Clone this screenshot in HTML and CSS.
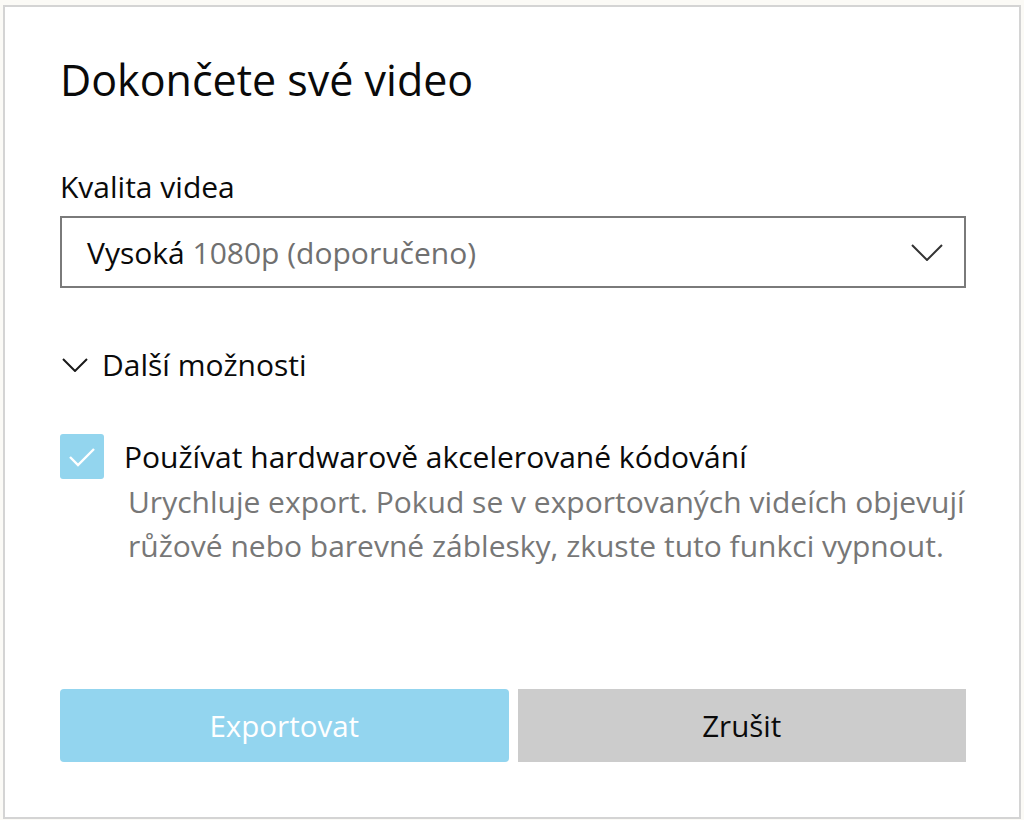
FILE: index.html
```html
<!DOCTYPE html>
<html lang="cs">
<head>
<meta charset="utf-8">
<title>Dokončete své video</title>
<link rel="stylesheet" href="styles.css">
</head>
<body>
<div class="dialog">
  <h1 class="title">Dokončete své video</h1>
  <div class="field-label">Kvalita videa</div>
  <div class="select">
    <span class="select-value"><span class="strong">Vysoká</span> <span class="muted">1080p (doporučeno)</span></span>
    <svg class="select-chevron" width="32" height="17" viewBox="0 0 32 17"><path d="M1 1 L16 16 L31 1" fill="none" stroke="#333" stroke-width="2"/></svg>
  </div>
  <div class="expander">
    <svg class="expander-chevron" width="26" height="14" viewBox="0 0 26 14"><path d="M1 1 L13 13 L25 1" fill="none" stroke="#1a1a1a" stroke-width="2"/></svg>
    <span>Další možnosti</span>
  </div>
  <div class="check-row">
    <div class="checkbox"><svg width="44" height="44" viewBox="0 0 44 44"><path d="M10 23 L18 31 L34 15" fill="none" stroke="#fff" stroke-width="2.4"/></svg></div>
    <span class="check-label">Používat hardwarově akcelerované kódování</span>
  </div>
  <p class="description">Urychluje export. Pokud se v exportovaných videích objevují růžové nebo barevné záblesky, zkuste tuto funkci vypnout.</p>
  <div class="actions">
    <button class="btn btn-primary">Exportovat</button>
    <button class="btn btn-secondary">Zrušit</button>
  </div>
</div>
</body>
</html>
```

FILE: styles.css
```css
html, body {
  margin: 0;
  padding: 0;
  background: #fbfaf6;
}
body {
  font-family: "Open Sans", "Noto Sans", sans-serif;
  color: #0a0a0a;
  width: 1024px;
  height: 820px;
  overflow: hidden;
}
.dialog {
  box-sizing: border-box;
  margin: 5px 3px 0 3px;
  width: 1018px;
  height: 814px;
  background: #fff;
  border: 2px solid #d4d4d4;
  padding: 45px 53px 55px 55px;
  display: flex;
  flex-direction: column;
}
.title {
  margin: 0;
  font-weight: 400;
  font-size: 43px;
  line-height: 56px;
  color: #0a0a0a;
}
.field-label {
  margin-top: 59px;
  font-size: 30px;
  line-height: 40px;
}
.select {
  margin-top: 9px;
  height: 72px;
  box-sizing: border-box;
  border: 2px solid #7a7a7a;
  display: flex;
  align-items: center;
  justify-content: space-between;
  padding: 0 21px 0 25px;
  font-size: 30px;
}
.muted { color: #707070; }
.strong { color: #0a0a0a; }
.expander {
  margin-top: 57px;
  display: flex;
  align-items: center;
  gap: 14px;
  font-size: 30px;
  line-height: 40px;
  padding-left: 2px;
}
.check-row {
  margin-top: 49px;
  display: flex;
  align-items: center;
  gap: 20px;
  font-size: 30px;
  line-height: 40px;
}
.checkbox {
  width: 44px;
  height: 45px;
  border-radius: 3px;
  background: #93d5ee;
  flex: none;
}
.checkbox svg { display: block; }
.description {
  margin: 1px 0 0 68px;
  font-size: 30px;
  line-height: 44px;
  color: #777;
}
.actions {
  margin-top: auto;
  display: flex;
  gap: 9px;
}
.btn {
  flex: 1;
  height: 73px;
  border: none;
  font-family: inherit;
  font-size: 29.5px;
  padding: 0;
}
.btn-primary {
  background: #93d5ef;
  color: #fff;
  border-radius: 4px;
}
.btn-secondary {
  background: #cccccc;
  color: #0a0a0a;
}
```
